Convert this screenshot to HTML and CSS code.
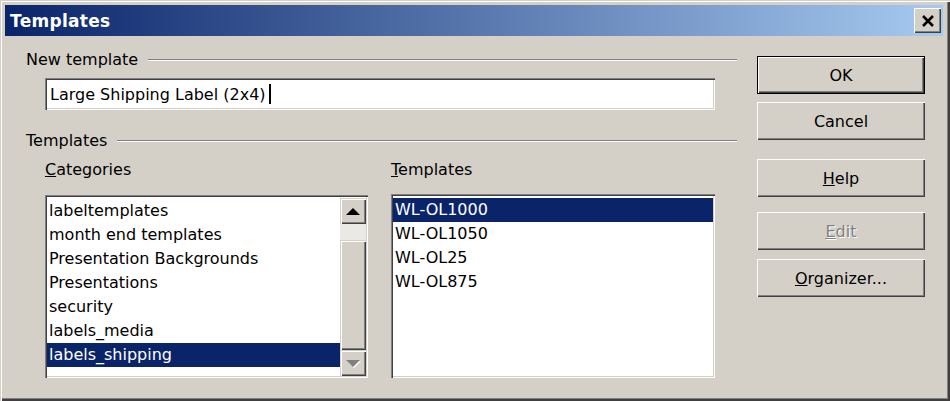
FILE: index.html
```html
<!DOCTYPE html>
<html>
<head>
<meta charset="utf-8">
<title>Templates</title>
<link rel="stylesheet" href="styles.css">
</head>
<body>
<div class="window">
  <div class="titlebar">
    <span class="title">Templates</span>
    <div class="close">
      <svg width="14" height="12" viewBox="0 0 14 12"><path d="M2 1 L12 11 M12 1 L2 11" stroke="#000" stroke-width="2.6" fill="none"/></svg>
    </div>
  </div>
  <div class="body">
    <div class="main">
      <div class="group-head"><span>New template</span><span class="rule"></span></div>
      <div class="input"><span>Large Shipping Label (2x4)</span><span class="caret"></span></div>
      <div class="group-head second"><span>Templates</span><span class="rule"></span></div>
      <div class="lists">
        <div class="col">
          <div class="col-label"><u>C</u>ategories</div>
          <div class="listbox cat">
            <div class="items">
              <div class="item">labeltemplates</div>
              <div class="item">month end templates</div>
              <div class="item">Presentation Backgrounds</div>
              <div class="item">Presentations</div>
              <div class="item">security</div>
              <div class="item">labels_media</div>
              <div class="item sel">labels_shipping</div>
            </div>
            <div class="scrollbar">
              <div class="sb-btn"><span class="arrow-up"></span></div>
              <div class="sb-track"></div>
              <div class="sb-thumb"></div>
              <div class="sb-btn"><span class="arrow-down"></span></div>
            </div>
          </div>
        </div>
        <div class="col">
          <div class="col-label"><u>T</u>emplates</div>
          <div class="listbox tpl">
            <div class="items">
              <div class="item sel">WL-OL1000</div>
              <div class="item">WL-OL1050</div>
              <div class="item">WL-OL25</div>
              <div class="item">WL-OL875</div>
            </div>
          </div>
        </div>
      </div>
    </div>
    <div class="buttons">
      <div class="btn default">OK</div>
      <div class="btn b-cancel">Cancel</div>
      <div class="btn b-help"><u>H</u>elp</div>
      <div class="btn b-edit disabled"><u>E</u>dit</div>
      <div class="btn b-org"><u>O</u>rganizer...</div>
    </div>
  </div>
</div>
</body>
</html>
```

FILE: styles.css
```css
* { box-sizing: border-box; }
html, body { margin: 0; padding: 0; background: #D4D0C8; }
body { font-family: "DejaVu Sans", "Noto Sans", sans-serif; font-size: 16px; color: #000; }

.window {
  width: 950px;
  height: 401px;
  background: #D4D0C8;
  padding: 5px 7px 6px 5px;
  display: flex;
  flex-direction: column;
  box-shadow: inset 1px 1px #D4D0C8, inset 2px 2px #fff, inset -2px -2px #404040, inset -3px -3px #808080;
}

.titlebar {
  height: 31px;
  flex: none;
  display: flex;
  align-items: center;
  padding-left: 5px;
  background: linear-gradient(to right, #0A246A, #A6CAF0);
}
.title { color: #fff; font-weight: bold; font-size: 17px; letter-spacing: 0.3px; }
.close {
  margin-left: auto;
  margin-right: 2px;
  width: 27px;
  height: 25px;
  background: #D4D0C8;
  display: flex;
  align-items: center;
  justify-content: center;
  box-shadow: inset 1px 1px #fff, inset -1px -1px #404040, inset -2px -2px #808080;
}

.body { flex: 1; display: flex; padding: 14px 0 0 21px; }
.main { width: 711px; display: flex; flex-direction: column; }

.group-head { display: flex; align-items: center; height: 20px; line-height: 20px; }
.group-head.second { margin-top: 21px; }
.rule { flex: 1; margin-left: 10px; height: 2px; border-top: 1px solid #808080; border-bottom: 1px solid #fff; }

.input {
  margin: 8px 0 0 19px;
  width: 670px;
  height: 32px;
  background: #fff;
  display: flex;
  align-items: center;
  padding-left: 5px;
  box-shadow: inset 1px 1px #808080, inset 2px 2px #404040, inset -1px -1px #fff, inset -2px -2px #D4D0C8;
}
.caret { width: 2px; height: 20px; background: #000; margin-left: 3px; }

.lists { display: flex; gap: 23px; margin: 9px 0 0 19px; }
.col { display: flex; flex-direction: column; }
.col-label { height: 20px; line-height: 20px; }
.listbox {
  margin-top: 15px;
  height: 183px;
  background: #fff;
  padding: 2px;
  display: flex;
  box-shadow: inset 1px 1px #808080, inset 2px 2px #404040, inset -1px -1px #fff, inset -2px -2px #D4D0C8;
}
.listbox.cat { width: 323px; }
.listbox.tpl { width: 324px; margin-top: 14px; height: 184px; }
.items { flex: 1; padding-top: 2px; }
.item { height: 24px; line-height: 24px; padding-left: 2px; white-space: nowrap; }
.item.sel { background: #0A246A; color: #fff; }

.scrollbar { width: 26px; display: flex; flex-direction: column; padding-top: 1px; }
.sb-btn {
  height: 26px;
  flex: none;
  background: #D4D0C8;
  display: flex;
  align-items: center;
  justify-content: center;
  box-shadow: inset 1px 1px #D4D0C8, inset 2px 2px #fff, inset -1px -1px #404040, inset -2px -2px #808080;
}
.sb-track { height: 16px; flex: none; background: #EBE9E5; }
.sb-thumb {
  flex: 1;
  background: #D4D0C8;
  box-shadow: inset 1px 1px #D4D0C8, inset 2px 2px #fff, inset -1px -1px #404040, inset -2px -2px #808080;
}
.arrow-up { width: 0; height: 0; border-left: 7px solid transparent; border-right: 7px solid transparent; border-bottom: 7px solid #000; }
.arrow-down {
  width: 0; height: 0;
  border-left: 7px solid transparent; border-right: 7px solid transparent; border-top: 7px solid #808080;
  filter: drop-shadow(1px 1px 0 #fff);
}

.buttons { margin-left: 20px; padding-top: 6px; display: flex; flex-direction: column; }
.btn {
  width: 168px;
  height: 38px;
  display: flex;
  align-items: center;
  justify-content: center;
  background: #D4D0C8;
  box-shadow: inset 1px 1px #fff, inset -1px -1px #404040, inset -2px -2px #808080;
}
.btn.default { box-shadow: inset 0 0 0 1px #000, inset 2px 2px #fff, inset -2px -2px #404040, inset -3px -3px #808080; }
.b-cancel { margin-top: 8px; }
.b-help { margin-top: 19px; }
.b-edit { margin-top: 15px; }
.b-org { margin-top: 9px; }
.btn.disabled { color: #808080; text-shadow: 1px 1px 0 #fff; }
```
